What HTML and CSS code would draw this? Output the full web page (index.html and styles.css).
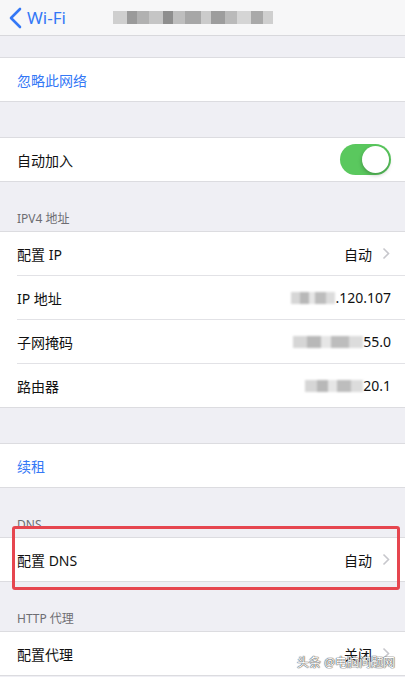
FILE: index.html
```html
<!DOCTYPE html>
<html lang="zh-CN">
<head>
    <meta charset="UTF-8" />
    <meta name="viewport" content="width=device-width, initial-scale=1.0" />
    <title>Wi-Fi</title>
    <link rel="stylesheet" href="styles.css">
</head>
<body>
    <!-- Top navigation -->
    <div class="navbar">
        <a class="back" href="#">
            <svg width="14" height="22" viewBox="0 0 14 22"><polyline points="12,2 3,11 12,20" fill="none" stroke="#3478f6" stroke-width="2.6" stroke-linecap="round" stroke-linejoin="round"/></svg>
            <span>Wi-Fi</span>
        </a>
        <div class="nav-title">
            <span class="m" style="width:14px;background:#c9c9c9"></span>
            <span class="m" style="width:10px;background:#8a8a8a"></span>
            <span class="m" style="width:12px;background:#a5a5a5"></span>
            <span class="m" style="width:14px;background:#bdbdbd"></span>
            <span class="m" style="width:10px;background:#7c7c7c"></span>
            <span class="m" style="width:12px;background:#b5b5b5"></span>
            <span class="m" style="width:16px;background:#9a9a9a"></span>
            <span class="m" style="width:10px;background:#c4c4c4"></span>
            <span class="m" style="width:14px;background:#8e8e8e"></span>
            <span class="m" style="width:12px;background:#b0b0b0"></span>
            <span class="m" style="width:14px;background:#d0d0d0"></span>
            <span class="m" style="width:12px;background:#9c9c9c"></span>
            <span class="m" style="width:10px;background:#c9c9c9"></span>
        </div>
    </div>

    <div class="gap-sm"></div>
    <div class="group">
        <div class="row"><span class="link">忽略此网络</span></div>
    </div>

    <div class="gap"></div>
    <div class="group">
        <div class="row">
            <span>自动加入</span>
            <span class="toggle"><span class="knob"></span></span>
        </div>
    </div>

    <div class="header">IPV4 地址</div>
    <div class="group">
        <div class="row">
            <span>配置 IP</span>
            <span class="value">自动<svg class="chev" width="8" height="13" viewBox="0 0 8 13"><polyline points="1.5,1.5 6.5,6.5 1.5,11.5" fill="none" stroke="#c7c7cc" stroke-width="1.6"/></svg></span>
        </div>
        <div class="row">
            <span>IP 地址</span>
            <span class="value plain"><span class="blur" style="width:44px"></span>.120.107</span>
        </div>
        <div class="row">
            <span>子网掩码</span>
            <span class="value plain"><span class="blur" style="width:70px"></span>55.0</span>
        </div>
        <div class="row">
            <span>路由器</span>
            <span class="value plain"><span class="blur" style="width:58px"></span>20.1</span>
        </div>
    </div>

    <div class="gap"></div>
    <div class="group">
        <div class="row"><span class="link">续租</span></div>
    </div>

    <div class="dns-section">
        <div class="header">DNS</div>
        <div class="group">
            <div class="row">
                <span>配置 DNS</span>
                <span class="value">自动<svg class="chev" width="8" height="13" viewBox="0 0 8 13"><polyline points="1.5,1.5 6.5,6.5 1.5,11.5" fill="none" stroke="#c7c7cc" stroke-width="1.6"/></svg></span>
            </div>
        </div>
        <!-- red marker around the DNS row -->
        <div class="mark"></div>
    </div>

    <div class="header">HTTP 代理</div>
    <div class="group">
        <div class="row">
            <span>配置代理</span>
            <span class="value">关闭<svg class="chev" width="8" height="13" viewBox="0 0 8 13"><polyline points="1.5,1.5 6.5,6.5 1.5,11.5" fill="none" stroke="#c7c7cc" stroke-width="1.6"/></svg></span>
        </div>
    </div>

    <div class="watermark">头条 @电脑问题网</div>
</body>
</html>
```

FILE: styles.css
```css
body {
    margin: 0;
    background: #efeff4;
    font-family: "Noto Sans", "Noto Sans CJK SC", sans-serif;
    color: #111;
    height: 677px;
    overflow: hidden;
    position: relative;
}

/* Navigation bar */
.navbar {
    height: 35px;
    background: #f7f7f8;
    border-bottom: 1px solid #d8d8dc;
    display: flex;
    align-items: center;
    position: relative;
}

.back {
    display: flex;
    align-items: center;
    gap: 5px;
    padding-left: 8px;
    color: #3478f6;
    text-decoration: none;
    font-size: 17px;
}

.nav-title {
    position: absolute;
    left: 113px;
    top: 11px;
    display: flex;
    height: 13px;
    filter: blur(0.7px);
    opacity: 0.85;
}

.nav-title .m {
    display: block;
    height: 13px;
}

/* Grouped table */
.gap-sm {
    height: 21px;
}

.gap {
    height: 35px;
}

.group {
    background: #fff;
    border-top: 1px solid #dcdce0;
    border-bottom: 1px solid #dcdce0;
}

.row {
    height: 43px;
    margin-left: 17px;
    padding-right: 14px;
    display: flex;
    align-items: center;
    justify-content: space-between;
    font-size: 14px;
    border-bottom: 1px solid #e2e2e6;
}

.row:last-child {
    border-bottom: none;
}

.link {
    color: #3478f6;
}

.value {
    display: flex;
    align-items: center;
    gap: 10px;
    color: #111;
}

.value.plain {
    gap: 0;
}

.chev {
    margin-right: 1px;
}

.blur {
    display: block;
    height: 12px;
    background: linear-gradient(90deg, #d6d6d6 0 20%, #b8b8b8 20% 40%, #e6e6e6 40% 55%, #bdbdbd 55% 80%, #dcdcdc 80%);
    filter: blur(1px);
}

.header {
    height: 49px;
    box-sizing: border-box;
    display: flex;
    align-items: flex-end;
    padding: 0 0 4px 17px;
    font-size: 12px;
    color: #6d6d72;
}

/* Switch */
.toggle {
    width: 51px;
    height: 31px;
    border-radius: 16px;
    background: #5ac85e;
    position: relative;
}

.knob {
    position: absolute;
    right: 2px;
    top: 2px;
    width: 27px;
    height: 27px;
    border-radius: 50%;
    background: #fff;
    box-shadow: 0 2px 4px rgba(0, 0, 0, 0.25);
}

/* DNS highlight */
.dns-section {
    position: relative;
}

.mark {
    position: absolute;
    left: 12px;
    top: 38px;
    width: 382px;
    height: 58px;
    border: 3px solid #e6464f;
    border-radius: 3px;
}

.watermark {
    position: absolute;
    right: 10px;
    bottom: 6px;
    font-size: 12px;
    color: #fff;
    text-shadow: 0 0 1px #555, 0 0 1px #555, 0 0 1px #555;
}
```
